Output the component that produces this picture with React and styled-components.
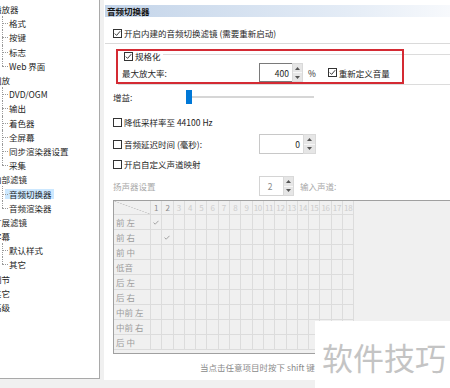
import React from 'react';
import styled, { createGlobalStyle, css } from 'styled-components';

const GlobalStyle = createGlobalStyle`
  body {
    margin: 0;
    padding: 0;
    background: #f0f0f0;
  }
  #root {
    width: 450px;
    height: 388px;
  }
`;

const Root = styled.div`
  position: relative;
  display: flex;
  width: 450px;
  height: 388px;
  overflow: hidden;
  background: #f0f0f0;
  font-family: "Noto Sans CJK SC", "Liberation Sans", sans-serif;
  font-size: 8.5px;
  color: #1e1e1e;
`;

/* ---------- tree ---------- */

const Tree = styled.div`
  width: 99px;
  height: 376px;
  padding-top: 2px;
  background: #fff;
  border-right: 1px solid #a9a9a9;
  border-bottom: 1px solid #a9a9a9;
  overflow: hidden;
  flex-shrink: 0;
`;

const TreeItem = styled.div`
  position: relative;
  height: 14.2px;
  display: flex;
  align-items: center;
  white-space: nowrap;
  ${(p) =>
    p.$child &&
    css`
      padding-left: 9px;
      &::before {
        content: '';
        position: absolute;
        left: 2px;
        top: 0;
        height: ${p.$last ? '50%' : '100%'};
        border-left: 1px dotted #9a9a9a;
      }
      &::after {
        content: '';
        position: absolute;
        left: 2px;
        top: 50%;
        width: 6px;
        border-top: 1px dotted #9a9a9a;
      }
    `}
`;

const TreeLabel = styled.span`
  line-height: 10px;
  margin-left: ${(p) => (p.$child ? '0' : '-7px')};
  ${(p) =>
    p.$selected &&
    css`
      margin-left: -4px;
      padding: 0 2px 0 4px;
      background: #cce8ff;
    `}
`;

/* ---------- right panel ---------- */

const Panel = styled.div`
  position: relative;
  margin-left: 4px;
  width: 346px;
  height: 380px;
  background: #fff;
  display: flex;
  flex-direction: column;
`;

const Header = styled.div`
  margin: 5px 0 0 1px;
  height: 12px;
  line-height: 12px;
  padding-left: 2px;
  font-weight: bold;
  color: #111;
  background: linear-gradient(to right, #c3d4e9, #e4ecf6 70%, #f7f9fc);
`;

const Row = styled.div`
  display: flex;
  align-items: center;
  height: ${(p) => p.$h || 10}px;
  margin-top: ${(p) => p.$mt || 0}px;
  padding-left: ${(p) => (p.$pl === undefined ? 9 : p.$pl)}px;
  white-space: nowrap;
  color: ${(p) => (p.$disabled ? '#a8a8a8' : 'inherit')};
`;

const Separator = styled.div`
  margin: 5px 0 0 1px;
  height: 1px;
  background: #dadada;
`;

const Box = styled.span`
  width: 9px;
  height: 9px;
  box-sizing: border-box;
  border: 1px solid #333;
  background: #fff;
  display: inline-flex;
  align-items: center;
  justify-content: center;
  flex-shrink: 0;
  margin-right: 2px;
  margin-left: ${(p) => p.$ml || 0}px;
`;

const CheckBox = ({ checked, ml }) => (
  <Box $ml={ml}>
    {checked && (
      <svg width="7" height="7" viewBox="0 0 7 7">
        <polyline points="0.8,3.6 2.6,5.4 6.2,1.2" fill="none" stroke="#222" strokeWidth="0.9" />
      </svg>
    )}
  </Box>
);

const GroupBox = styled.div`
  display: flex;
  flex-direction: column;
  margin: 10px 0 0 14px;
  border-top: 1px solid #dcdcdc;
  border-bottom: 1px solid #dcdcdc;
  padding-bottom: 2px;
`;

const GroupTitle = styled.div`
  display: flex;
  align-items: center;
  align-self: flex-start;
  height: 10px;
  margin-top: -4px;
  padding: 0 2px 0 6px;
  background: #fff;
  white-space: nowrap;
`;

const FieldLabel = styled.span`
  width: ${(p) => p.$w}px;
  flex-shrink: 0;
  display: flex;
  align-items: center;
`;

const Spin = styled.div`
  display: flex;
  height: ${(p) => p.$h || 20}px;
  margin-left: ${(p) => p.$ml || 0}px;
`;

const SpinInput = styled.div`
  width: ${(p) => p.$w}px;
  box-sizing: border-box;
  border: 1px solid ${(p) => p.$border || '#7a7a7a'};
  border-right: none;
  display: flex;
  align-items: center;
  justify-content: ${(p) => (p.$center ? 'center' : 'flex-end')};
  padding-right: 3px;
  color: ${(p) => p.$color || '#1e1e1e'};
  background: #fff;
`;

const SpinButtons = styled.div`
  width: ${(p) => p.$w || 10}px;
  display: flex;
  flex-direction: column;
  border: 1px solid #d9d9d9;
  box-sizing: border-box;
  background: #e6e6e6;
`;

const SpinHalf = styled.div`
  flex: 1;
  display: flex;
  align-items: center;
  justify-content: center;
  & + & {
    border-top: 1px solid #f7f7f7;
  }
`;

const Arrow = ({ down }) => (
  <svg width="5" height="3" viewBox="0 0 5 3">
    <polygon points={down ? '0,0 5,0 2.5,3' : '0,3 5,3 2.5,0'} fill="#555" />
  </svg>
);

const SpinBox = ({ value, w, bw, h, border, color, center, ml }) => (
  <Spin $h={h} $ml={ml}>
    <SpinInput $w={w} $border={border} $color={color} $center={center}>
      {value}
    </SpinInput>
    <SpinButtons $w={bw}>
      <SpinHalf>
        <Arrow />
      </SpinHalf>
      <SpinHalf>
        <Arrow down />
      </SpinHalf>
    </SpinButtons>
  </Spin>
);

const Annotation = styled.div`
  position: absolute;
  left: 12px;
  top: 49px;
  width: 288px;
  height: 35px;
  box-sizing: border-box;
  border: 2px solid #d42a33;
  pointer-events: none;
`;

const Slider = styled.div`
  display: flex;
  align-items: center;
  height: 14px;
`;

const Track = styled.div`
  width: 126px;
  height: 2px;
  background: #d6d6d6;
  margin-left: -4px;
`;

const Thumb = styled.div`
  width: 6px;
  height: 14px;
  background: #0078d7;
  position: relative;
  z-index: 1;
`;

/* ---------- channel grid ---------- */

const GridFrame = styled.div`
  margin: 4px 0 0 9px;
  height: 152px;
  border: 1px solid #a0a0a0;
  border-right: none;
  background: #f0f0f0;
  flex-shrink: 0;
`;

const Grid = styled.div`
  display: grid;
  grid-template-columns: 37px repeat(18, 11.3px);
  grid-template-rows: 14px repeat(9, 15px);
  width: max-content;
`;

const Cell = styled.div`
  box-sizing: border-box;
  border-right: 1px solid #dcdcdc;
  border-bottom: 1px solid #dcdcdc;
  display: flex;
  align-items: center;
  justify-content: ${(p) => (p.$head ? 'flex-start' : 'center')};
  padding-left: ${(p) => (p.$head ? 2 : 0)}px;
  font-size: ${(p) => (p.$num ? 8 : 8.5)}px;
  letter-spacing: ${(p) => (p.$num ? '-0.3px' : '0')};
  color: ${(p) => p.$color || '#9c9c9c'};
  white-space: nowrap;
  overflow: hidden;
`;

const Corner = styled(Cell)`
  background: linear-gradient(
    to top right,
    transparent calc(50% - 0.5px),
    #c4c4c4 50%,
    transparent calc(50% + 0.5px)
  );
`;

// the rest of the hint sits under the watermark, so it is clipped there
const Footer = styled.div`
  margin-top: 8px;
  margin-left: 96px;
  width: 115px;
  overflow: hidden;
  line-height: 10px;
  color: #8a8a8a;
  white-space: nowrap;
`;

const Watermark = styled.div`
  position: absolute;
  left: 315px;
  top: 321px;
  width: 135px;
  height: 67px;
  box-sizing: border-box;
  padding: 4px 0 0 7px;
  background: #fff;
  display: flex;
  align-items: center;
  font-size: 31px;
  line-height: 1;
  color: #c4c4c4;
  white-space: nowrap;
`;

const treeData = [
  { t: '播放器' },
  { t: '格式', c: 1 },
  { t: '按键', c: 1 },
  { t: '标志', c: 1 },
  { t: 'Web 界面', c: 1, last: 1 },
  { t: '回放' },
  { t: 'DVD/OGM', c: 1 },
  { t: '输出', c: 1 },
  { t: '着色器', c: 1 },
  { t: '全屏幕', c: 1 },
  { t: '同步渲染器设置', c: 1 },
  { t: '采集', c: 1, last: 1 },
  { t: '内部滤镜' },
  { t: '音频切换器', c: 1, sel: 1 },
  { t: '音频渲染器', c: 1, last: 1 },
  { t: '扩展滤镜' },
  { t: '字幕' },
  { t: '默认样式', c: 1 },
  { t: '其它', c: 1, last: 1 },
  { t: '调节' },
  { t: '其它' },
  { t: '高级' },
];

const channels = ['前 左', '前 右', '前 中', '低音', '后 左', '后 右', '中前 左', '中前 右', '后 中'];

const SmallCheck = () => (
  <svg width="6" height="5" viewBox="0 0 6 5">
    <polyline points="0.5,2.6 2.2,4.2 5.5,0.8" fill="none" stroke="#9a9a9a" strokeWidth="0.9" />
  </svg>
);

const App = () => {
  const cols = Array.from({ length: 18 }, (_, i) => i + 1);

  return (
    <Root>
      <GlobalStyle />
      <Tree>
        {treeData.map((item, i) => (
          <TreeItem key={i} $child={item.c} $last={item.last}>
            <TreeLabel $child={item.c} $selected={item.sel}>
              {item.t}
            </TreeLabel>
          </TreeItem>
        ))}
      </Tree>

      <Panel>
        <Header>音频切换器</Header>

        <Row $mt={11}>
          <CheckBox checked />
          开启内建的音频切换滤镜 (需要重新启动)
        </Row>
        <Separator />

        <GroupBox>
          <GroupTitle>
            <CheckBox checked />
            规格化
          </GroupTitle>
          <Row $h={19} $mt={2} $pl={4}>
            <FieldLabel $w={137}>最大放大率:</FieldLabel>
            <SpinBox value="400" w={33} bw={11} h={19} />
            <span style={{ marginLeft: 5 }}>%</span>
            <CheckBox checked ml={12} />
            重新定义音量
          </Row>
        </GroupBox>

        <Row $h={14} $mt={5}>
          <FieldLabel $w={73}>增益:</FieldLabel>
          <Slider>
            <Thumb />
            <Track />
          </Slider>
        </Row>

        <Row $mt={13}>
          <CheckBox />
          降低采样率至 44100 Hz
        </Row>
        <Row $h={20} $mt={7}>
          <FieldLabel $w={146}>
            <CheckBox />
            音频延迟时间 (毫秒):
          </FieldLabel>
          <SpinBox value="0" w={44} bw={13} border="#c8c8c8" />
        </Row>
        <Row $mt={5}>
          <CheckBox />
          开启自定义声道映射
        </Row>
        <Row $h={20} $mt={7} $disabled>
          <FieldLabel $w={146}>扬声器设置</FieldLabel>
          <SpinBox value="2" w={24} bw={11} border="#d4d4d4" color="#8a8a8a" center />
          <span style={{ marginLeft: 6 }}>输入声道:</span>
        </Row>

        <GridFrame>
          <Grid>
            <Corner />
            {cols.map((n) => (
              <Cell key={n} $num $color={n <= 2 ? '#8c8c8c' : '#cdcdcd'}>
                {n}
              </Cell>
            ))}
            {channels.map((ch, r) => (
              <React.Fragment key={ch}>
                <Cell $head>{ch}</Cell>
                {cols.map((n) => (
                  <Cell key={n}>{n === r + 1 && r < 2 ? <SmallCheck /> : null}</Cell>
                ))}
              </React.Fragment>
            ))}
          </Grid>
        </GridFrame>

        <Footer>当点击任意项目时按下 shift 键可以选择多个声道</Footer>

        <Annotation />
      </Panel>

      <Watermark>软件技巧</Watermark>
    </Root>
  );
};

export default App;
